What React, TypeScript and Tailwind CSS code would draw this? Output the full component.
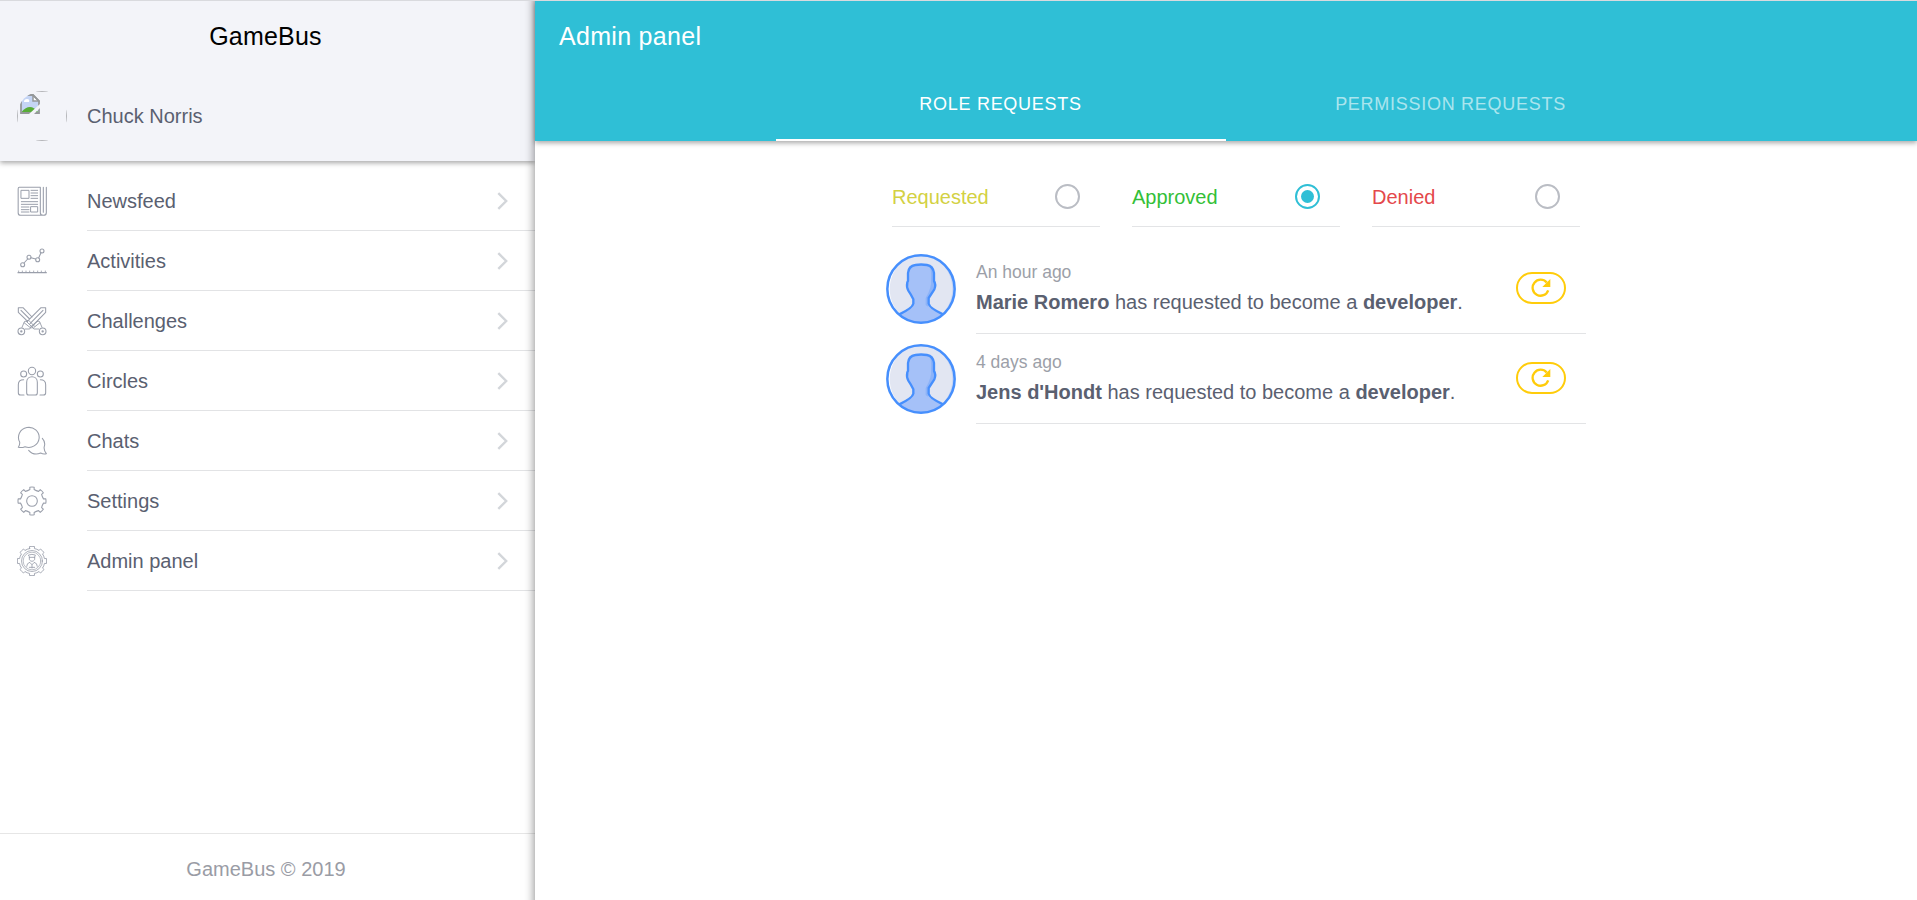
import React from "react";

function gearPath(c: number, outer: number, root: number, tip: number, base: number, dip: number): string {
  const pt = (r: number, deg: number) => {
    const a = ((deg - 90) * Math.PI) / 180;
    return `${(c + r * Math.cos(a)).toFixed(2)} ${(c + r * Math.sin(a)).toFixed(2)}`;
  };
  let d = "";
  for (let k = 0; k < 8; k++) {
    const a = k * 45;
    d += `${k === 0 ? "M" : "L"}${pt(root, a - base)}L${pt(outer, a - tip)}`;
    d += `A${outer} ${outer} 0 0 1 ${pt(outer, a + tip)}L${pt(root, a + base)}`;
    d += `Q${pt(root - dip, a + 22.5)} ${pt(root, a + 45 - base)}`;
  }
  return d + "Z";
}

function MenuIcon({ children }: { children: React.ReactNode }) {
  return (
    <svg
      viewBox="0 0 90 90"
      className="size-[30px] shrink-0"
      fill="none"
      stroke="#9a9fab"
      strokeWidth="3.200"
      strokeLinecap="round"
      strokeLinejoin="round"
    >
      {children}
    </svg>
  );
}

const newsfeed = (
  <MenuIcon>
    <path d="M70 4H7Q3.500 4 3.500 8V80Q3.500 88 11 88H79Q88 88 88 80V4M70 4V80Q70 88 79 88M79 4V79" />
    <path d="M13 13H36V37H13ZM42 13H62M42 21H62M42 29H62M42 37H62M13 47H62M13 55H62M13 63H36M13 71H36M13 78H36M42 62H62V78H42Z" strokeWidth="3" />
  </MenuIcon>
);
const activities = (
  <MenuIcon>
    <circle cx="17" cy="56" r="6" />
    <circle cx="36" cy="34" r="6" />
    <circle cx="62" cy="41" r="6" />
    <circle cx="75" cy="15" r="6" />
    <path d="M21 51 32 39M42 35 56 39M65 36 72 20" />
    <path d="M3 80H88" strokeWidth="3.500" />
    <path d="M5 75V79M16 75V79M27 75V79M38 75V79M50 75V79M62 75V79M73 75V79M85 75V79" strokeWidth="2.500" />
  </MenuIcon>
);
const challenges = (
  <MenuIcon>
    <path d="M4 5H18L45 33M4 5V19L32 46M86 5H72L30 47M86 5V19L50 56M12 13 38 39M78 13 39 53" />
    <path d="M30 47 24 45 21 50 40 65M29 47 46 64M35 43 53 61M50 56 45 66M60 47 66 45 69 50 50 65M60 47 41 62M54 52 39 66M21 50 15 64M69 50 75 64M25 69H37L44 63 51 69H65" strokeWidth="2.800" />
    <circle cx="13" cy="76" r="10" />
    <circle cx="77" cy="76" r="10" />
    <circle cx="13" cy="76" r="2" />
    <circle cx="77" cy="76" r="2" />
  </MenuIcon>
);
const circles = (
  <MenuIcon>
    <circle cx="45" cy="15" r="11" />
    <circle cx="20" cy="24" r="9" />
    <circle cx="70" cy="24" r="9" />
    <path d="M29 49C29 27 61 27 61 49V80Q61 87 55 87H35Q29 87 29 80ZM20 41Q4 41 4 56V80Q4 87 11 87H21M70 41Q86 41 86 56V80Q86 87 79 87H69" />
  </MenuIcon>
);
const chats = (
  <MenuIcon>
    <path d="M4 64Q9 57 8 48A31 30 0 1 1 24 62Q15 66 4 64Z" />
    <path d="M76 37Q86 48 82 61Q79 70 88 83Q80 86 71 81Q50 90 35 73" />
  </MenuIcon>
);
const settings = (
  <MenuIcon>
    <path d={gearPath(45, 42, 35, 9, 10.5, 2)} />
    <circle cx="45" cy="45" r="16" />
  </MenuIcon>
);
const admin = (
  <MenuIcon>
    <path d={gearPath(45, 44, 38, 10, 11, -1)} strokeWidth="2.600" />
    <circle cx="45" cy="45" r="31.500" strokeWidth="2.400" />
    <circle cx="45" cy="45" r="26.500" strokeWidth="2" />
    <path d="M35 27Q45 23 55 27L53 33V41Q45 51 37 41V33ZM37 34H53M38 49Q29 51 29 61M52 49Q61 51 61 61M39 50 45 56 51 50M45 56V66M37 64H53" strokeWidth="2.600" />
  </MenuIcon>
);

const menu = [
  { label: "Newsfeed", icon: newsfeed },
  { label: "Activities", icon: activities },
  { label: "Challenges", icon: challenges },
  { label: "Circles", icon: circles },
  { label: "Chats", icon: chats },
  { label: "Settings", icon: settings },
  { label: "Admin panel", icon: admin },
];

function MissingPicture() {
  return (
    <div className="size-[50px] shrink-0 overflow-hidden rounded-full">
      <div className="size-full border border-[#b4b5b9] p-[2px]">
        <svg viewBox="0 0 20 20" className="size-5">
          <path d="M1 1H13L19 7V19H1Z" fill="#c5d5f5" />
          <path d="M4 8Q4 5 7 5Q10 5 9 8Z" fill="#fff" />
          <path d="M1.500 18Q10 8 18 18V19H1Z" fill="#58ad38" />
          <path d="M13 1V7H19Z" fill="#fff" stroke="#95989a" strokeWidth="1.500" />
          <path d="M1 1H13L19 7V19H1Z" fill="none" stroke="#95989a" strokeWidth="1.800" />
          <path d="M9 20 20 10V14L14 20Z" fill="#f3f4f9" />
          <path d="M0 0H9L0 6Z" fill="#f3f4f9" />
        </svg>
      </div>
    </div>
  );
}

function Sidebar() {
  return (
    <aside className="flex w-[535px] shrink-0 flex-col bg-white">
      <header className="h-[160px] shrink-0 bg-[#f3f4f9] shadow-[0_2px_5px_rgba(0,0,0,0.35)]">
        <h1 className="flex h-[70px] items-center justify-center pt-[2px] pr-1 text-[25px] tracking-[0.2px] text-black">
          GameBus
        </h1>
        <div className="flex h-[90px] items-center pl-[17px]">
          <MissingPicture />
          <span className="pl-5 text-[20px]">Chuck Norris</span>
        </div>
      </header>
      <nav className="flex-1 pt-[10px]">
        {menu.map((item) => (
          <a key={item.label} className="flex h-[60px] items-center pl-[17px]">
            {item.icon}
            <span className="ml-10 flex h-full flex-1 items-center justify-between border-b border-[#e2e3e5] pr-[27px] text-[20px]">
              {item.label}
              <svg viewBox="0 0 11 18" className="h-[18px] w-[11px]" fill="none" stroke="#d3d6da" strokeWidth="2.400">
                <path d="M1.300 1.200 9.200 9 1.300 16.800" />
              </svg>
            </span>
          </a>
        ))}
      </nav>
      <footer className="flex h-[67px] items-center justify-center border-t border-[#e6e6e6] pt-[3px] pr-[3px] text-[20px] text-[#9a9ca5]">
        GameBus © 2019
      </footer>
    </aside>
  );
}

function Avatar() {
  return (
    <svg viewBox="0 0 210 210" className="size-[70px] shrink-0">
      <circle cx="105" cy="105" r="102" fill="#e2e6f2" />
      <path d="M50 22A99 99 0 0 0 50 188A108 108 0 0 1 50 22Z" fill="#fff" />
      <path d="M160 22A99 99 0 0 1 160 188A108 108 0 0 0 160 22Z" fill="#c7d5f3" />
      <path
        d="M40 181Q80 162 82 149V136Q74 120 67 110Q61 100 64 85L66 81V57Q68 36 88 33Q105 30 123 33Q141 36 144 57V81Q151 92 145 106L128 132V149Q130 162 171 181Q144 207 105 207Q66 207 40 181Z"
        fill="#a5c1f8"
      />
      <path d="M130 37Q137 47 135 76Q138 101 119 132V153L126 158V132L142 105Q149 94 142 81V57Q141 42 130 37Z" fill="#8cb3f8" />
      <path
        d="M40 181Q80 162 82 149V136Q74 120 67 110Q61 100 64 85L66 81V57Q68 36 88 33Q105 30 123 33Q141 36 144 57V81Q151 92 145 106L128 132V149Q130 162 171 181"
        fill="none"
        stroke="#468ffd"
        strokeWidth="7"
        strokeLinejoin="round"
      />
      <circle cx="105" cy="105" r="101" fill="none" stroke="#468ffd" strokeWidth="7.500" />
    </svg>
  );
}

function StatusOption({ label, color, checked }: { label: string; color: string; checked?: boolean }) {
  return (
    <label className={`flex h-[60px] w-[208px] items-center justify-between border-b border-[#e3e4e6] pr-5 text-[20px] ${color}`}>
      {label}
      <span
        className={`flex size-[25px] items-center justify-center rounded-full border-2 ${checked ? "border-[#2fbfd6]" : "border-[#babdc4]"}`}
      >
        {checked && <span className="size-[13px] rounded-full bg-[#2fbfd6]" />}
      </span>
    </label>
  );
}

function RequestRow({ when, name }: { when: string; name: string }) {
  return (
    <li className="flex h-[90px] items-stretch pl-5">
      <div className="pt-[10px]">
        <Avatar />
      </div>
      <div className="ml-5 flex flex-1 items-center justify-between border-b border-[#e3e4e6] pr-5">
        <div className="pb-[3px]">
          <p className="text-[17.500px] leading-[30px] text-[#9c9fa8]">{when}</p>
          <p className="text-[20px] leading-[30px]">
            <b>{name}</b> has requested to become a <b>developer</b>.
          </p>
        </div>
        <button className="mb-[1px] flex h-8 w-[50px] items-center justify-center rounded-full border-2 border-[#ffcc0a]">
          <svg viewBox="0 0 20 20" className="mb-[1px] size-5">
            <path d="M17.200 12.300A8 8 0 1 1 15.700 4.500" fill="none" stroke="#ffcc0a" strokeWidth="2.300" />
            <path d="M19.300 1V9H11.300Z" fill="#ffcc0a" />
          </svg>
        </button>
      </div>
    </li>
  );
}

export default function App() {
  return (
    <div className="flex h-[900px] w-[1917px] overflow-hidden border-t border-[#d9dade] bg-white font-['Liberation_Sans',Arial,sans-serif] text-[#5a6070]">
      <Sidebar />
      <main className="relative -my-5 flex flex-1 flex-col bg-white py-5 shadow-[0_0_10px_rgba(0,0,0,0.5)]">
        <header className="flex h-[140px] flex-col bg-[#2fbfd6] text-white shadow-[0_2px_5px_rgba(0,0,0,0.35)]">
          <h2 className="flex h-[70px] items-center pt-[2px] pl-6 text-[25px] tracking-[0.3px]">Admin panel</h2>
          <div className="mx-auto flex h-[70px] w-[900px] text-[18px] tracking-[0.04em]">
            <div className="flex flex-1 items-center justify-center border-b-2 border-white pr-[1px] pb-[1px]">ROLE REQUESTS</div>
            <div className="flex flex-1 items-center justify-center border-b-2 border-transparent pr-[1px] pb-[1px] text-white/60">
              PERMISSION REQUESTS
            </div>
          </div>
        </header>
        <section className="mx-auto w-[720px] pt-[26px]">
          <div className="flex gap-8 pl-[26px]">
            <StatusOption label="Requested" color="text-[#d3d143]" />
            <StatusOption label="Approved" color="text-[#33bf38]" checked />
            <StatusOption label="Denied" color="text-[#e4484b]" />
          </div>
          <ul className="pt-[17px]">
            <RequestRow when="An hour ago" name="Marie Romero" />
            <RequestRow when="4 days ago" name="Jens d'Hondt" />
          </ul>
        </section>
      </main>
    </div>
  );
}
